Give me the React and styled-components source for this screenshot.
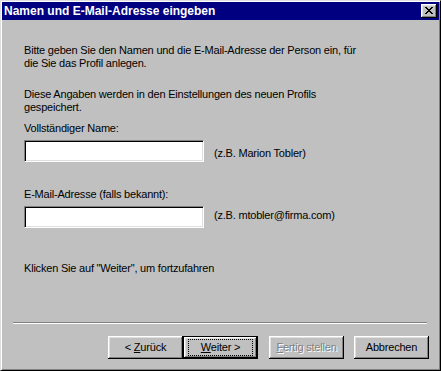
import styled, { createGlobalStyle } from "styled-components";

const GlobalStyle = createGlobalStyle`
  html, body {
    margin: 0;
    padding: 0;
    background: #c0c0c0;
  }
  * {
    box-sizing: border-box;
  }
`;

function CloseGlyph() {
  return (
    <svg width="8" height="7" viewBox="0 0 8 7" shapeRendering="crispEdges">
      <path
        d="M0 0h2v1H0zM6 0h2v1H6zM1 1h2v1H1zM5 1h2v1H5zM2 2h4v1H2zM3 3h2v1H3zM2 4h4v1H2zM1 5h2v1H1zM5 5h2v1H5zM0 6h2v1H0zM6 6h2v1H6z"
        fill="#000"
      />
    </svg>
  );
}

export default function App() {
  return (
    <>
      <GlobalStyle />
      <Window>
        <TitleBar>
          <Title>Namen und E-Mail-Adresse eingeben</Title>
          <CloseButton aria-label="Schließen">
            <CloseGlyph />
          </CloseButton>
        </TitleBar>

        <Body>
          <Content>
            <Paragraph>
              Bitte geben Sie den Namen und die E-Mail-Adresse der Person ein, für
              <br />
              die Sie das Profil anlegen.
            </Paragraph>

            <Paragraph $top={18}>
              Diese Angaben werden in den Einstellungen des neuen Profils
              <br />
              gespeichert.
            </Paragraph>

            <Field $top={8}>
              <Label>Vollständiger Name:</Label>
              <FieldRow>
                <TextBox />
                <Hint $offset={7}>(z.B. Marion Tobler)</Hint>
              </FieldRow>
            </Field>

            <Field $top={26}>
              <Label>E-Mail-Adresse (falls bekannt):</Label>
              <FieldRow>
                <TextBox />
                <Hint $offset={3}>(z.B. mtobler@firma.com)</Hint>
              </FieldRow>
            </Field>

            <Paragraph $top={34}>
              Klicken Sie auf "Weiter", um fortzufahren
            </Paragraph>
          </Content>

          <Separator />

          <ButtonRow>
            <ButtonPair>
              <PushButton>
                <span>
                  &lt; <u>Z</u>urück
                </span>
              </PushButton>
              <PushButton $default>
                <FocusRect>
                  <span>
                    <u>W</u>eiter &gt;
                  </span>
                </FocusRect>
              </PushButton>
            </ButtonPair>
            <PushButton disabled>
              <span>
                <u>F</u>ertig stellen
              </span>
            </PushButton>
            <PushButton>
              <span>Abbrechen</span>
            </PushButton>
          </ButtonRow>
        </Body>
      </Window>
    </>
  );
}

const Window = styled.div`
  width: 441px;
  height: 371px;
  display: flex;
  flex-direction: column;
  padding: 1px;
  background: #c0c0c0;
  border: 1px solid;
  border-color: #dfdfdf #000 #000 #dfdfdf;
  box-shadow: inset 1px 1px #fff, inset -1px -1px #808080;
  font-family: "Liberation Sans", Arial, sans-serif;
  font-size: 11px;
  letter-spacing: -0.2px;
  color: #000;
`;

const TitleBar = styled.div`
  height: 18px;
  flex: none;
  display: flex;
  align-items: center;
  justify-content: space-between;
  padding: 0 2px 0 2px;
  background: #000080;
`;

const Title = styled.div`
  color: #fff;
  font-weight: 700;
  font-size: 12px;
  letter-spacing: 0;
  line-height: 14px;
  white-space: nowrap;
`;

const CloseButton = styled.div`
  width: 16px;
  height: 14px;
  display: flex;
  align-items: center;
  justify-content: center;
  padding: 0 0 1px 0;
  background: #c0c0c0;
  box-shadow: inset -1px -1px #000, inset 1px 1px #fff, inset -2px -2px #808080,
    inset 2px 2px #dfdfdf;
`;

const Body = styled.div`
  flex: 1;
  display: flex;
  flex-direction: column;
  padding: 0 10px 10px 0;
`;

const Content = styled.div`
  display: flex;
  flex-direction: column;
  padding: 24px 0 0 22px;
`;

const Paragraph = styled.p`
  margin: ${(p) => p.$top || 0}px 0 0 0;
  line-height: 13px;
  white-space: nowrap;
`;

const Field = styled.div`
  display: flex;
  flex-direction: column;
  gap: 5px;
  margin-top: ${(p) => p.$top}px;
`;

const Label = styled.div`
  line-height: 13px;
`;

const FieldRow = styled.div`
  display: flex;
  align-items: flex-start;
  gap: 10px;
`;

const TextBox = styled.div`
  width: 180px;
  height: 22px;
  background: #fff;
  border: 1px solid;
  border-color: #808080 #fff #fff #808080;
  box-shadow: inset 1px 1px #000, inset -1px -1px #dfdfdf;
`;

const Hint = styled.div`
  margin-top: ${(p) => p.$offset}px;
  line-height: 13px;
  white-space: nowrap;
`;

const Separator = styled.div`
  margin: auto 0 0 11px;
  height: 2px;
  width: 414px;
  border-top: 1px solid #808080;
  border-bottom: 1px solid #fff;
`;

const ButtonRow = styled.div`
  display: flex;
  justify-content: flex-end;
  gap: 10px;
  margin-top: 12px;
`;

const ButtonPair = styled.div`
  display: flex;
  margin-right: 1px;
`;

const PushButton = styled.div`
  width: 75px;
  height: 23px;
  display: flex;
  align-items: center;
  justify-content: center;
  padding: 0 0 1px 0;
  background: #c0c0c0;
  line-height: 13px;
  white-space: nowrap;
  color: ${(p) => (p.disabled ? "#808080" : "#000")};
  text-shadow: ${(p) => (p.disabled ? "1px 1px #fff" : "none")};
  border: ${(p) => (p.$default ? "1px solid #000" : "none")};
  box-shadow: inset -1px -1px #000, inset 1px 1px #fff, inset -2px -2px #808080,
    inset 2px 2px #dfdfdf;

  u {
    text-decoration-thickness: 1px;
    text-underline-offset: 1px;
  }
`;

const FocusRect = styled.span`
  width: 63px;
  height: 15px;
  display: flex;
  align-items: center;
  justify-content: center;
  outline: 1px dotted #000;
  outline-offset: 0;
`;
